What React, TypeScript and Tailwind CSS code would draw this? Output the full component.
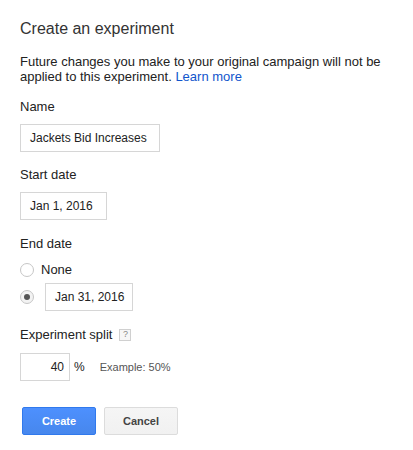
export default function App() {
  return (
    <div className="flex h-[450px] w-[413px] flex-col items-start bg-white pl-5 pr-4 pt-5 font-['Liberation_Sans',Arial,sans-serif] text-[#222]">
      <h1 className="text-[16px] leading-[18px] text-[#333]">Create an experiment</h1>

      <p className="mt-[16px] text-[13px] leading-[15px]">
        Future changes you make to your original campaign will not be applied to this experiment.{" "}
        <a href="#" className="text-[#15c]">
          Learn more
        </a>
      </p>

      <Label className="mt-[15px]">Name</Label>
      <Field className="mt-[10px] w-[140px]" value="Jackets Bid Increases" />

      <Label className="mt-[15px]">Start date</Label>
      <Field className="mt-[10px] w-[87px]" value="Jan 1, 2016" />

      <Label className="mt-[16px]">End date</Label>
      <div className="mt-[11px] flex h-[15px] items-center">
        <Radio checked={false} />
        <span className="ml-[7px] text-[13px] leading-[15px]">None</span>
      </div>
      <div className="mt-[6px] flex items-center">
        <Radio checked />
        <Field className="ml-[11px] w-[88px]" value="Jan 31, 2016" />
      </div>

      <div className="mt-[16px] flex items-center">
        <span className="text-[13px] leading-[15px]">Experiment split</span>
        <span className="ml-[7px] flex h-[12px] w-[12px] items-center justify-center border border-[#d0d0d0] bg-[#f6f6f6] text-[9px] leading-none text-[#888]">
          ?
        </span>
      </div>
      <div className="mt-[11px] flex items-center">
        <div className="flex h-[28px] w-[50px] items-center justify-end border border-[#d6d6d6] bg-white pr-[5px] text-[12px]">
          40
        </div>
        <span className="ml-[4px] text-[12px]">%</span>
        <span className="ml-[15px] text-[11px] text-[#555]">Example: 50%</span>
      </div>

      <div className="mt-[26px] ml-[2px] flex gap-[8px]">
        <button className="flex h-[28px] w-[74px] items-center justify-center rounded-[2px] border border-[#3079ed] bg-gradient-to-b from-[#4d90fe] to-[#4787ed] text-[11px] font-bold text-white">
          Create
        </button>
        <button className="flex h-[28px] w-[74px] items-center justify-center rounded-[2px] border border-[#dcdcdc] bg-gradient-to-b from-[#f5f5f5] to-[#f1f1f1] text-[11px] font-bold text-[#444]">
          Cancel
        </button>
      </div>
    </div>
  );
}

function Label({ children, className = "" }: { children: React.ReactNode; className?: string }) {
  return <div className={`text-[13px] leading-[15px] ${className}`}>{children}</div>;
}

function Field({ value, className = "" }: { value: string; className?: string }) {
  return (
    <div className={`flex h-[28px] items-center border border-[#d6d6d6] bg-white pl-[9px] text-[12px] ${className}`}>
      {value}
    </div>
  );
}

function Radio({ checked }: { checked: boolean }) {
  return (
    <span
      className={`flex h-[14px] w-[14px] items-center justify-center rounded-full border border-[#c6c6c6] ${
        checked ? "bg-[#f3f3f3]" : "bg-white"
      }`}
    >
      {checked && <span className="h-[6px] w-[6px] rounded-full bg-[#555]" />}
    </span>
  );
}
